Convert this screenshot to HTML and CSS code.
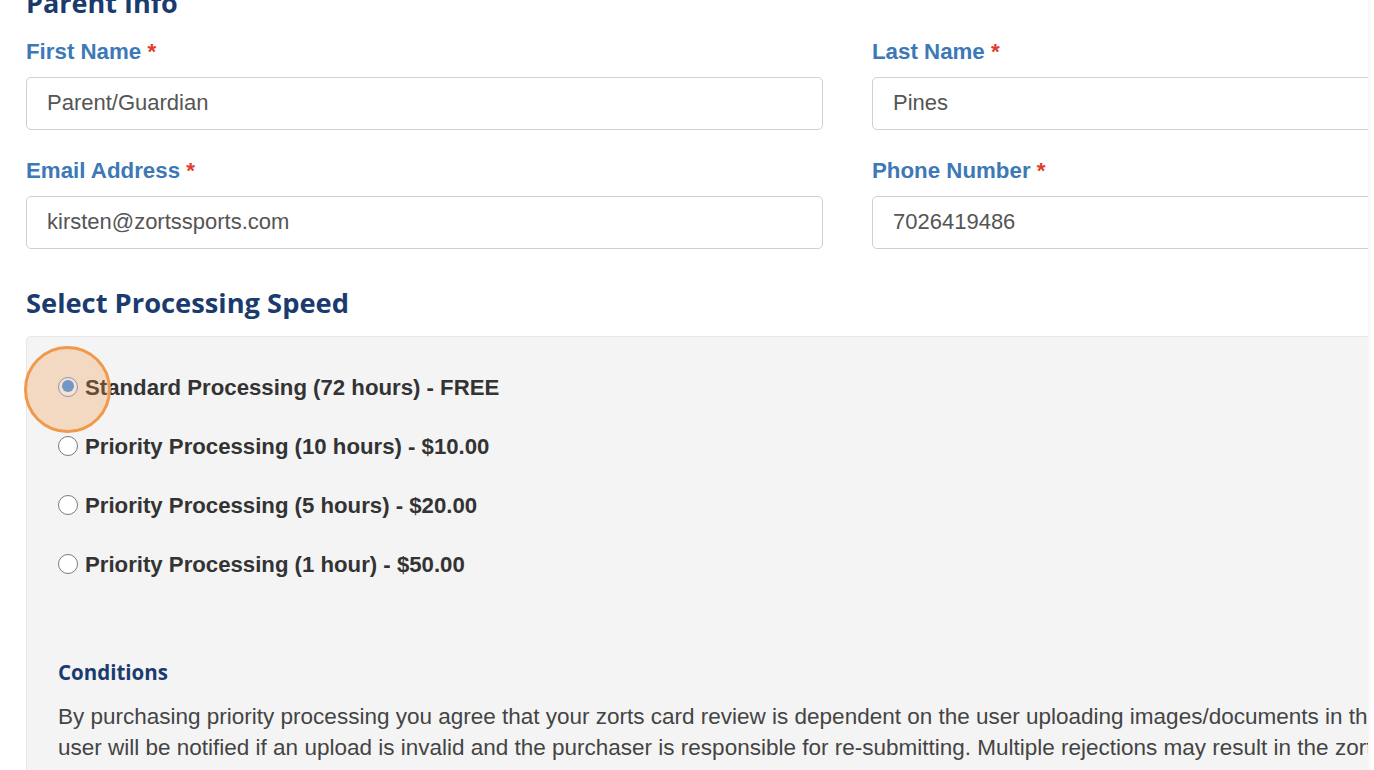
FILE: index.html
```html
<!DOCTYPE html>
<html lang="en">
<head>
<meta charset="utf-8">
<title>Parent Info</title>
<link rel="stylesheet" href="styles.css">
</head>
<body>
<div class="card">
  <h2 class="section-title">Parent Info</h2>
  <div class="card-body">
    <div class="fields">
      <div class="field">
        <label class="label">First Name <span class="req">*</span></label>
        <div class="input">Parent/Guardian</div>
      </div>
      <div class="field">
        <label class="label">Last Name <span class="req">*</span></label>
        <div class="input">Pines</div>
      </div>
      <div class="field">
        <label class="label">Email Address <span class="req">*</span></label>
        <div class="input">kirsten@zortssports.com</div>
      </div>
      <div class="field">
        <label class="label">Phone Number <span class="req">*</span></label>
        <div class="input">7026419486</div>
      </div>
    </div>

    <h2 class="speed-title">Select Processing Speed</h2>

    <div class="speed-box">
      <div class="option">
        <span class="radio checked"><span class="click-ring"></span></span>
        <span class="option-text">Standard Processing (72 hours) - FREE</span>
      </div>
      <div class="option">
        <span class="radio"></span>
        <span class="option-text">Priority Processing (10 hours) - $10.00</span>
      </div>
      <div class="option">
        <span class="radio"></span>
        <span class="option-text">Priority Processing (5 hours) - $20.00</span>
      </div>
      <div class="option">
        <span class="radio"></span>
        <span class="option-text">Priority Processing (1 hour) - $50.00</span>
      </div>

      <h3 class="conditions-title">Conditions</h3>
      <p class="conditions-text">By purchasing priority processing you agree that your zorts card review is dependent on the user uploading images/documents in the correct format. The user will be notified if an upload is invalid and the purchaser is responsible for re-submitting. Multiple rejections may result in the zorts card review taking longer than the purchased processing time.</p>
    </div>
  </div>
</div>
</body>
</html>
```

FILE: styles.css
```css
html, body {
  margin: 0;
  padding: 0;
  background: #ffffff;
  overflow: hidden;
  height: 770px;
}

body {
  font-family: "Liberation Sans", Arial, sans-serif;
}

.card {
  margin: 6px 0 0 -6px;
  width: 1374px;
  background: #ffffff;
  border-radius: 14px 14px 0 0;
  box-shadow: 0 0 5px rgba(0, 0, 0, 0.09);
  position: relative;
  height: 800px;
}

.section-title {
  position: relative;
  z-index: 2;
  margin: -18px 0 0 32px;
  font-family: "Open Sans", "Noto Sans", sans-serif;
  font-weight: 700;
  font-size: 27px;
  line-height: 30px;
  color: #1b3b6f;
  height: 19px;
  overflow: visible;
}

.card-body {
  overflow: hidden;
  padding: 32px 0 0 32px;
  height: 760px;
}

.fields {
  display: grid;
  grid-template-columns: 797px 797px;
  column-gap: 49px;
}

.field {
  margin-bottom: 28px;
}

.label {
  display: block;
  font-weight: 700;
  font-size: 22.3px;
  line-height: 26px;
  color: #3c79b6;
  margin-bottom: 12px;
}

.req {
  color: #e23a2c;
}

.input {
  box-sizing: border-box;
  height: 53px;
  border: 1.5px solid #cfcfcf;
  border-radius: 5px;
  padding: 0 20px;
  font-size: 22px;
  line-height: 50px;
  color: #555555;
  background: #ffffff;
}

.speed-title {
  margin: 10px 0 17px 0;
  font-family: "Open Sans", "Noto Sans", sans-serif;
  font-weight: 700;
  font-size: 27.3px;
  line-height: 32px;
  color: #1b3b6f;
}

.speed-box {
  background: #f4f4f4;
  border: 1px solid #e6e6e6;
  border-radius: 5px 0 0 0;
  padding: 38px 0 0 31px;
  height: 460px;
  width: 1700px;
}

.option {
  display: flex;
  align-items: center;
  height: 26px;
  margin-bottom: 33px;
}

.radio {
  position: relative;
  box-sizing: border-box;
  width: 20px;
  height: 20px;
  border-radius: 50%;
  border: 1.2px solid #7a7a7a;
  background: #ffffff;
  margin-right: 7px;
  margin-top: -3px;
  flex: none;
}

.radio.checked {
  border: 1.5px solid #5c9cff;
  background: #ffffff;
}

.radio.checked::after {
  content: "";
  position: absolute;
  left: 2.5px;
  top: 2.5px;
  width: 12px;
  height: 12px;
  border-radius: 50%;
  background: #3f9cff;
}

.click-ring {
  position: absolute;
  box-sizing: border-box;
  left: -35px;
  top: -32px;
  width: 87px;
  height: 87px;
  border-radius: 50%;
  border: 3px solid #f0994a;
  background: rgba(240, 140, 60, 0.27);
  z-index: 3;
}

.option-text {
  font-weight: 700;
  font-size: 22.2px;
  line-height: 26px;
  color: #333333;
}

.conditions-title {
  margin: 82px 0 0 0;
  font-family: "Open Sans", "Noto Sans", sans-serif;
  font-weight: 700;
  font-size: 20.5px;
  line-height: 24px;
  color: #1b3b6f;
}

.conditions-text {
  margin: 17px 0 0 0;
  width: 1545px;
  font-size: 22.5px;
  line-height: 31px;
  color: #444444;
}
```
